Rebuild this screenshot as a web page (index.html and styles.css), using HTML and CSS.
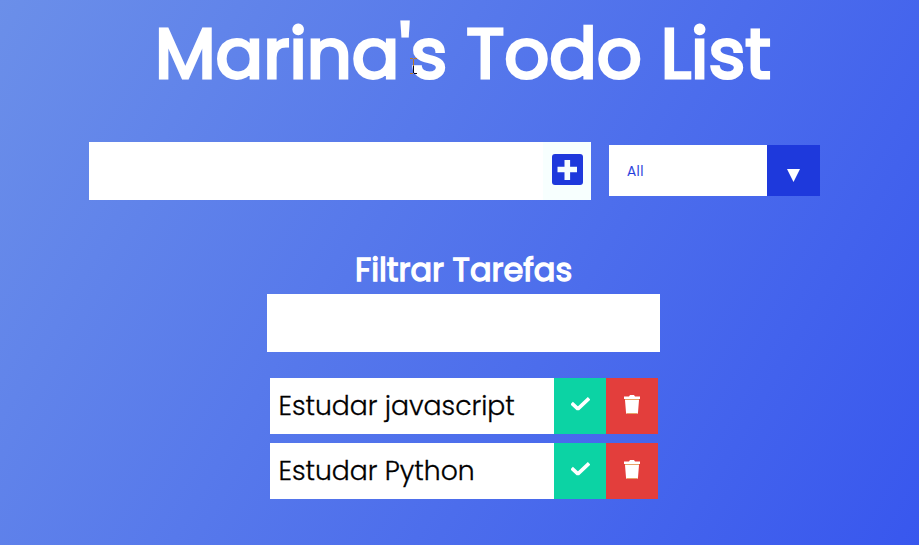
FILE: index.html
```html
<!DOCTYPE html>
<html lang="pt-BR">
<head>
<meta charset="utf-8">
<title>Marina's Todo List</title>
<link rel="stylesheet" href="styles.css">
</head>
<body>
<header><h1>Marina's Todo List</h1>
<svg class="cursor" width="7" height="17" viewBox="0 0 7 17" shape-rendering="crispEdges"><path d="M0 .5h3m1 0h3M3.500 1v7M0 15.500h3" stroke="#b87828"/><path d="M3.500 8v7M4 15.500h3" stroke="#100818"/></svg>
</header>
<form class="controls">
  <div class="entry">
    <input class="entry-input" type="text" aria-label="Nova tarefa">
    <button class="add" type="button" aria-label="Adicionar"><svg width="31" height="31" viewBox="0 0 31 31"><rect width="31" height="31" rx="3" fill="#1e39dc"/><path d="M12.500 6h5.600v6.700H25v5.600h-6.900V26h-5.600v-7.700H5.500v-5.600h7z" fill="#f7fffe"/></svg></button>
  </div>
  <div class="select"><span class="value">All</span><span class="arrow"><svg width="13" height="13" viewBox="0 0 13 13"><path d="M0 0h13L6.500 13z" fill="#fff"/></svg></span></div>
</form>
<section class="filter">
  <h2>Filtrar Tarefas</h2>
  <input class="filter-input" type="text" aria-label="Filtrar tarefas">
</section>
<ul class="tasks">
  <li><span class="task">Estudar javascript</span>
    <button class="done" type="button" aria-label="Concluir"><svg width="19" height="15" viewBox="0 0 19 15"><path d="M2 7.300l4.900 4.600L16.800 2.500" fill="none" stroke="#fff" stroke-width="3.600" stroke-linecap="square" stroke-linejoin="bevel"/></svg></button>
    <button class="trash" type="button" aria-label="Excluir"><svg width="16" height="19" viewBox="0 0 16 19"><path d="M0 1.500h5L6 0h4l1 1.500h5V4H0zM1 5h14l-1 12.500q-.1 1.500-1.500 1.500h-9Q2.100 19 2 17.500z" fill="#fff"/><path d="M1 4.500h14M3 18.500h10" stroke="#e6a267"/></svg></button></li>
  <li><span class="task">Estudar Python</span>
    <button class="done" type="button" aria-label="Concluir"><svg width="19" height="15" viewBox="0 0 19 15"><path d="M2 7.300l4.900 4.600L16.800 2.500" fill="none" stroke="#fff" stroke-width="3.600" stroke-linecap="square" stroke-linejoin="bevel"/></svg></button>
    <button class="trash" type="button" aria-label="Excluir"><svg width="16" height="19" viewBox="0 0 16 19"><path d="M0 1.500h5L6 0h4l1 1.500h5V4H0zM1 5h14l-1 12.500q-.1 1.500-1.500 1.500h-9Q2.100 19 2 17.500z" fill="#fff"/><path d="M1 4.500h14M3 18.500h10" stroke="#e6a267"/></svg></button></li>
</ul>
</body>
</html>
```
FILE: styles.css
```css
* { box-sizing: border-box; margin: 0; padding: 0; }
body {
  height: 545px;
  overflow: hidden;
  background: linear-gradient(120deg, #6b8fe9, #3857ee);
  color: #fff;
  font-family: Poppins, Inter, sans-serif;
}
button, input { border: 0; outline: 0; border-radius: 0; }
svg { display: block; }
header { position: relative; height: 142px; padding: 10px 0 0 155px; }
h1 { font-size: 70.4px; line-height: 87px; font-weight: 400; -webkit-text-stroke: 3px #fff; white-space: nowrap; }
.cursor { position: absolute; left: 410px; top: 58px; }
.controls { display: flex; gap: 18px; margin-left: 89px; height: 58px; align-items: center; }
.entry { display: flex; width: 502px; height: 58px; }
.entry-input { width: 454px; background: #fff; }
.add { width: 48px; background: #f7fffe; display: flex; align-items: center; padding: 0 0 3px 9px; }
.select { display: flex; width: 211px; height: 51px; background: #fff; margin-top: -1px; }
.value { width: 158px; padding-left: 18px; font-size: 14px; line-height: 52px; font-weight: 300; letter-spacing: .4px; -webkit-text-stroke: .2px #1e39dc; color: #1e39dc; }
.arrow { width: 53px; background: #1e39dc; display: flex; align-items: center; justify-content: center; padding-top: 10px; }
.filter { width: 393px; margin: 50px 0 0 267px; }
h2 { font-size: 32px; line-height: 40px; padding-bottom: 4px; font-weight: 400; -webkit-text-stroke: 1.3px #fff; padding-left: 88px; white-space: nowrap; }
.filter-input { display: block; width: 393px; height: 58px; background: #fff; }
.tasks { list-style: none; display: grid; gap: 9px; width: 388px; margin: 26px 0 0 270px; }
.tasks li { display: flex; height: 56px; }
.task { width: 284px; background: #fff; color: #000; padding-left: 8.500px; font-size: 26.67px; line-height: 56px; font-weight: 300; -webkit-text-stroke: .3px #000; white-space: nowrap; }
.done, .trash { width: 52px; display: flex; align-items: center; justify-content: center; padding-bottom: 3px; }
.done { background: #0cd3a4; }
.trash { background: #e33e3c; }
```
